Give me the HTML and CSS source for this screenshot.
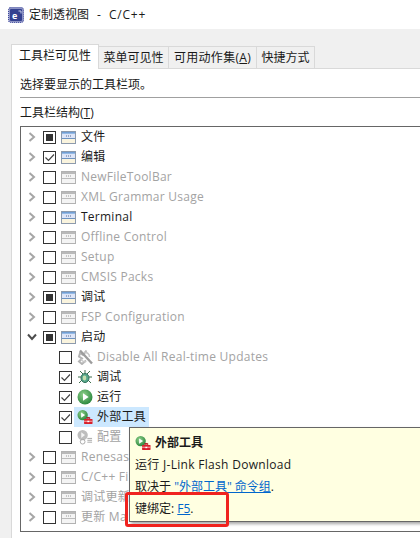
FILE: index.html
```html
<!DOCTYPE html>
<html lang="zh-CN">
<head>
    <meta charset="UTF-8">
    <meta name="viewport" content="width=device-width, initial-scale=1.0">
    <title>定制透视图 - C/C++</title>
    <link rel="stylesheet" href="styles.css">
</head>
<body>
    <svg class="defs" width="0" height="0">
        <defs>
            <linearGradient id="bar-blue" x1="0" y1="0" x2="0" y2="1">
                <stop offset="0" stop-color="#5f93cf"/>
                <stop offset="1" stop-color="#a9c6ea"/>
            </linearGradient>
            <radialGradient id="ball-green" cx="0.4" cy="0.35" r="0.75">
                <stop offset="0" stop-color="#8fd08a"/>
                <stop offset="1" stop-color="#1f7f35"/>
            </radialGradient>
            <symbol id="bar-on" viewBox="0 0 15 13">
                <rect x="0.5" y="0.5" width="14" height="12" fill="#fdf8e8" stroke="#8d9aac"/>
                <rect x="1" y="1" width="13" height="2" fill="url(#bar-blue)"/>
                <rect x="1" y="3" width="13" height="4" fill="#dde5f8"/>
                <path d="M5 5h6" stroke="#5d6a8c" stroke-dasharray="1 1"/>
                <rect x="1" y="7" width="13" height="1" fill="#6f93c2"/>
                <rect x="1" y="8" width="13" height="4" fill="#faf4de"/>
            </symbol>
            <symbol id="bar-off" viewBox="0 0 15 13">
                <rect x="0.5" y="0.5" width="14" height="12" fill="#f4f4f4" stroke="#b2b2b2"/>
                <rect x="1" y="1" width="13" height="2" fill="#b9b9b9"/>
                <path d="M5 5h6" stroke="#9a9a9a" stroke-dasharray="1 1"/>
                <rect x="1" y="7" width="13" height="1" fill="#bcbcbc"/>
            </symbol>
            <symbol id="run" viewBox="0 0 16 16">
                <circle cx="8" cy="8" r="7.5" fill="url(#ball-green)"/>
                <path d="M6 4.2 11.6 8 6 11.8z" fill="#fff"/>
            </symbol>
            <symbol id="run-tool" viewBox="0 0 17 16">
                <circle cx="6" cy="6" r="5.5" fill="url(#ball-green)"/>
                <path d="M4.4 3.2 8.6 6 4.4 8.8z" fill="#fff"/>
                <path d="M10.5 8.5h3v1.5h-3z" fill="none" stroke="#b3121d"/>
                <rect x="7.5" y="10" width="9" height="5.5" rx="0.5" fill="#d9202c"/>
                <path d="M7.5 12.5h9" stroke="#f7b5b5"/>
                <path d="M11 12h2v1.500h-2z" fill="#fff"/>
            </symbol>
            <symbol id="bug" viewBox="0 0 16 16">
                <path d="M8 1v3M3 2l3 3M13 2l-3 3M1 8h3M12 8h3M2 14l3-3M14 14l-3-3" stroke="#3d6f4c" fill="none"/>
                <ellipse cx="8" cy="9" rx="4" ry="4.5" fill="#58a98c" stroke="#2f6e58"/>
                <ellipse cx="7.5" cy="9" rx="1.8" ry="2.4" fill="#c4dfae"/>
            </symbol>
            <symbol id="no-update" viewBox="0 0 16 16">
                <path d="M9.5 1.5 6 6 3 4 2 7.5l3 2-3 3 3 2.5 4-3.5" fill="none" stroke="#b4b4b4" stroke-width="2"/>
                <path d="M7 3.5a4.5 4.5 0 0 1 5.5 4.5M4 10a4.5 4.5 0 0 0 5 2.5" fill="none" stroke="#c8c8c8" stroke-width="1.5"/>
                <path d="M3 1.5 15 14.500" stroke="#9c9c9c" stroke-width="2.4"/>
            </symbol>
            <symbol id="config" viewBox="0 0 17 16">
                <circle cx="6" cy="6" r="5.500" fill="#bdbdbd"/>
                <path d="M4.500 3 8.500 6 4.500 9z" fill="#f4f4f4"/>
                <circle cx="6" cy="13" r="2.500" fill="none" stroke="#a8a8a8"/>
                <path d="M11 9.500h5M11 11.500h5M11 13.500h5" stroke="#a4a4a4"/>
            </symbol>
            <symbol id="chevron" viewBox="0 0 8 10">
                <path d="M1.500 1 6 5 1.500 9" fill="none" stroke="#a6a6a6" stroke-width="2"/>
            </symbol>
            <symbol id="chevron-open" viewBox="0 0 10 8">
                <path d="M1 1.500 5 6 9 1.500" fill="none" stroke="#4d4d4d" stroke-width="2"/>
            </symbol>
            <symbol id="tick" viewBox="0 0 11 11">
                <path d="M1.500 5.500 4.500 8.500 10 2.500" fill="none" stroke="#444" stroke-width="1.200"/>
            </symbol>
        </defs>
    </svg>

    <header class="titlebar">
        <svg class="app-icon" viewBox="0 0 16 16" width="16" height="16">
            <rect x="0.500" y="0.500" width="15" height="15" rx="2" fill="#8c92c4" stroke="#39459a" stroke-dasharray="1 1"/>
            <rect x="2" y="2" width="12" height="12" rx="1" fill="#33408f"/>
            <text class="app-icon-letter" x="4" y="11.500">e</text>
            <path d="M10.500 4h2.500v2.500" fill="none" stroke="#c7cdea"/>
        </svg>
        <span class="titlebar-text">定制透视图</span>
        <span class="titlebar-sep">-</span>
        <span class="titlebar-perspective">C/C++</span>
    </header>

    <main class="dialog">
        <nav class="tabs">
            <span class="tab tab-active">工具栏可见性</span>
            <span class="tab tab-menu">菜单可见性</span>
            <span class="tab tab-actions">可用动作集(<u>A</u>)</span>
            <span class="tab tab-keys">快捷方式</span>
        </nav>
        <section class="panel">
            <p class="hint">选择要显示的工具栏项。</p>
            <div class="separator"></div>
            <label class="tree-label">工具栏结构(<u>T</u>)</label>
            <div class="tree-wrap">
                <ul class="tree">
                    <li class="row"><svg class="arrow"><use href="#chevron"/></svg><span class="check mixed"></span><svg class="icon"><use href="#bar-on"/></svg><span class="name">文件</span></li>
                    <li class="row"><svg class="arrow"><use href="#chevron"/></svg><span class="check"><svg class="tick"><use href="#tick"/></svg></span><svg class="icon"><use href="#bar-on"/></svg><span class="name">编辑</span></li>
                    <li class="row off"><svg class="arrow"><use href="#chevron"/></svg><span class="check"></span><svg class="icon"><use href="#bar-off"/></svg><span class="name">NewFileToolBar</span></li>
                    <li class="row off"><svg class="arrow"><use href="#chevron"/></svg><span class="check"></span><svg class="icon"><use href="#bar-off"/></svg><span class="name">XML Grammar Usage</span></li>
                    <li class="row"><svg class="arrow"><use href="#chevron"/></svg><span class="check"></span><svg class="icon"><use href="#bar-on"/></svg><span class="name">Terminal</span></li>
                    <li class="row off"><svg class="arrow"><use href="#chevron"/></svg><span class="check"></span><svg class="icon"><use href="#bar-off"/></svg><span class="name">Offline Control</span></li>
                    <li class="row off"><svg class="arrow"><use href="#chevron"/></svg><span class="check"></span><svg class="icon"><use href="#bar-off"/></svg><span class="name">Setup</span></li>
                    <li class="row off"><svg class="arrow"><use href="#chevron"/></svg><span class="check"></span><svg class="icon"><use href="#bar-off"/></svg><span class="name">CMSIS Packs</span></li>
                    <li class="row"><svg class="arrow"><use href="#chevron"/></svg><span class="check mixed"></span><svg class="icon"><use href="#bar-on"/></svg><span class="name">调试</span></li>
                    <li class="row off"><svg class="arrow"><use href="#chevron"/></svg><span class="check"></span><svg class="icon"><use href="#bar-off"/></svg><span class="name">FSP Configuration</span></li>
                    <li class="row"><svg class="arrow arrow-open"><use href="#chevron-open"/></svg><span class="check mixed"></span><svg class="icon"><use href="#bar-on"/></svg><span class="name">启动</span></li>
                    <li class="row child off"><span class="check"></span><svg class="icon icon-action"><use href="#no-update"/></svg><span class="name">Disable All Real-time Updates</span></li>
                    <li class="row child"><span class="check"><svg class="tick"><use href="#tick"/></svg></span><svg class="icon icon-action"><use href="#bug"/></svg><span class="name">调试</span></li>
                    <li class="row child"><span class="check"><svg class="tick"><use href="#tick"/></svg></span><svg class="icon icon-action"><use href="#run"/></svg><span class="name">运行</span></li>
                    <li class="row child"><span class="check"><svg class="tick"><use href="#tick"/></svg></span><span class="selected"><svg class="icon icon-action"><use href="#run-tool"/></svg><span class="name">外部工具</span></span></li>
                    <li class="row child off"><span class="check"></span><svg class="icon icon-action"><use href="#config"/></svg><span class="name">配置</span></li>
                    <li class="row off"><svg class="arrow"><use href="#chevron"/></svg><span class="check"></span><svg class="icon"><use href="#bar-off"/></svg><span class="name">Renesas</span></li>
                    <li class="row off"><svg class="arrow"><use href="#chevron"/></svg><span class="check"></span><svg class="icon"><use href="#bar-off"/></svg><span class="name">C/C++ Fi</span></li>
                    <li class="row off"><svg class="arrow"><use href="#chevron"/></svg><span class="check"></span><svg class="icon"><use href="#bar-off"/></svg><span class="name">调试更新</span></li>
                    <li class="row off"><svg class="arrow"><use href="#chevron"/></svg><span class="check"></span><svg class="icon"><use href="#bar-off"/></svg><span class="name">更新 Ma</span></li>
                    <li class="row off"><svg class="arrow"><use href="#chevron"/></svg><span class="check"></span><svg class="icon"><use href="#bar-off"/></svg></li>
                </ul>
            </div>
        </section>
    </main>

    <aside class="tooltip">
        <div class="tooltip-title"><svg class="icon icon-action"><use href="#run-tool"/></svg><b>外部工具</b></div>
        <div class="tooltip-line tooltip-desc">运行 J-Link Flash Download</div>
        <div class="tooltip-line">取决于 <a href="#">"外部工具" 命令组</a>.</div>
        <div class="tooltip-line">键绑定: <a href="#">F5</a>.</div>
    </aside>
    <div class="callout"></div>
</body>
</html>
```

FILE: styles.css
```css
* {
    box-sizing: border-box;
}
html, body {
    height: 100%;
}
body {
    margin: 0;
    position: relative;
    overflow: hidden;
    background: #fff;
    color: #1a1a1a;
    font-family: "Open Sans", "Noto Sans CJK SC", sans-serif;
    font-size: 12px;
    line-height: 20px;
}
.defs {
    position: absolute;
}
.titlebar {
    height: 29px;
    padding-left: 8px;
    display: flex;
    align-items: center;
    background: #fff;
    white-space: nowrap;
}
.app-icon {
    flex: none;
    margin-right: 5px;
}
.app-icon-letter {
    font-size: 9px;
    font-weight: bold;
    fill: #fff;
}
.titlebar-sep {
    margin-left: 8px;
}
.titlebar-perspective {
    margin-left: 8px;
    letter-spacing: 0.8px;
}
.dialog {
    height: 509px;
    padding: 15px 0 0 11px;
    background: #f0f0f0;
}
.tabs {
    display: flex;
    align-items: flex-end;
    height: 24px;
}
.tab {
    height: 22px;
    padding-top: 1px;
    border: 1px solid #d9d9d9;
    border-bottom: none;
    border-left: none;
    text-align: center;
    white-space: nowrap;
}
.tab-active {
    width: 88px;
    height: 25px;
    margin-bottom: -1px;
    position: relative;
    border-left: 1px solid #d9d9d9;
    background: #fff;
}
.tab-menu {
    width: 70px;
}
.tab-actions {
    width: 88px;
    letter-spacing: 0.3px;
}
.tab-keys {
    width: 58px;
}
.panel {
    height: 470px;
    padding: 6px 0 0 8px;
    border-top: 1px solid #d9d9d9;
    border-left: 1px solid #d9d9d9;
    background: #fff;
}
.hint {
    margin: 0;
}
.separator {
    height: 1px;
    margin-top: 2px;
    background: #a0a0a0;
}
.tree-label {
    display: block;
    margin-top: 5px;
}
.tree-wrap {
    height: 406px;
    margin-top: 3px;
    overflow: hidden;
    border: 1px solid #666;
    border-right: none;
}
.tree {
    margin: 0;
    padding: 0;
    list-style: none;
}
.row {
    display: flex;
    align-items: center;
    height: 20px;
    padding-left: 7px;
    white-space: nowrap;
}
.row.off .name {
    color: #a3a3a3;
}
.row.child {
    padding-left: 38px;
}
.arrow {
    width: 8px;
    height: 10px;
    margin-right: 7px;
}
.arrow-open {
    width: 10px;
    height: 8px;
    margin-left: -1px;
    margin-right: 6px;
}
.check {
    flex: none;
    width: 13px;
    height: 13px;
    display: flex;
    align-items: center;
    justify-content: center;
    border: 1px solid #333;
    background: #fff;
}
.check.mixed::after {
    content: "";
    width: 7px;
    height: 7px;
    background: #333;
}
.tick {
    width: 11px;
    height: 11px;
}
.icon {
    flex: none;
    width: 15px;
    height: 13px;
    margin-left: 5px;
    margin-right: 5px;
}
.icon-action {
    width: 16px;
    height: 16px;
    margin-right: 4px;
}
.selected {
    display: flex;
    align-items: center;
    width: 75px;
    height: 20px;
    margin-left: 2px;
    background: #cce8ff;
}
.selected .icon {
    margin-left: 3px;
}
.name {
    letter-spacing: 0.25px;
}
.tooltip {
    position: absolute;
    left: 129px;
    top: 427px;
    width: 300px;
    height: 95px;
    padding: 4px 0 0 5px;
    background: #ffffe1;
    border: 1px solid #666;
    box-shadow: 2px 2px 3px rgba(0, 0, 0, 0.35);
}
.tooltip-title {
    display: flex;
    align-items: center;
    height: 21px;
}
.tooltip-title .icon {
    margin-left: 0;
    margin-right: 4px;
}
.tooltip-line {
    height: 20px;
    margin-top: 2px;
    white-space: nowrap;
}
.tooltip-desc {
    letter-spacing: 0.3px;
}
.tooltip a {
    color: #0066cc;
}
.callout {
    position: absolute;
    left: 125px;
    top: 492px;
    width: 104px;
    height: 35px;
    border: 3px solid #f0231f;
    border-radius: 3px;
}
```
